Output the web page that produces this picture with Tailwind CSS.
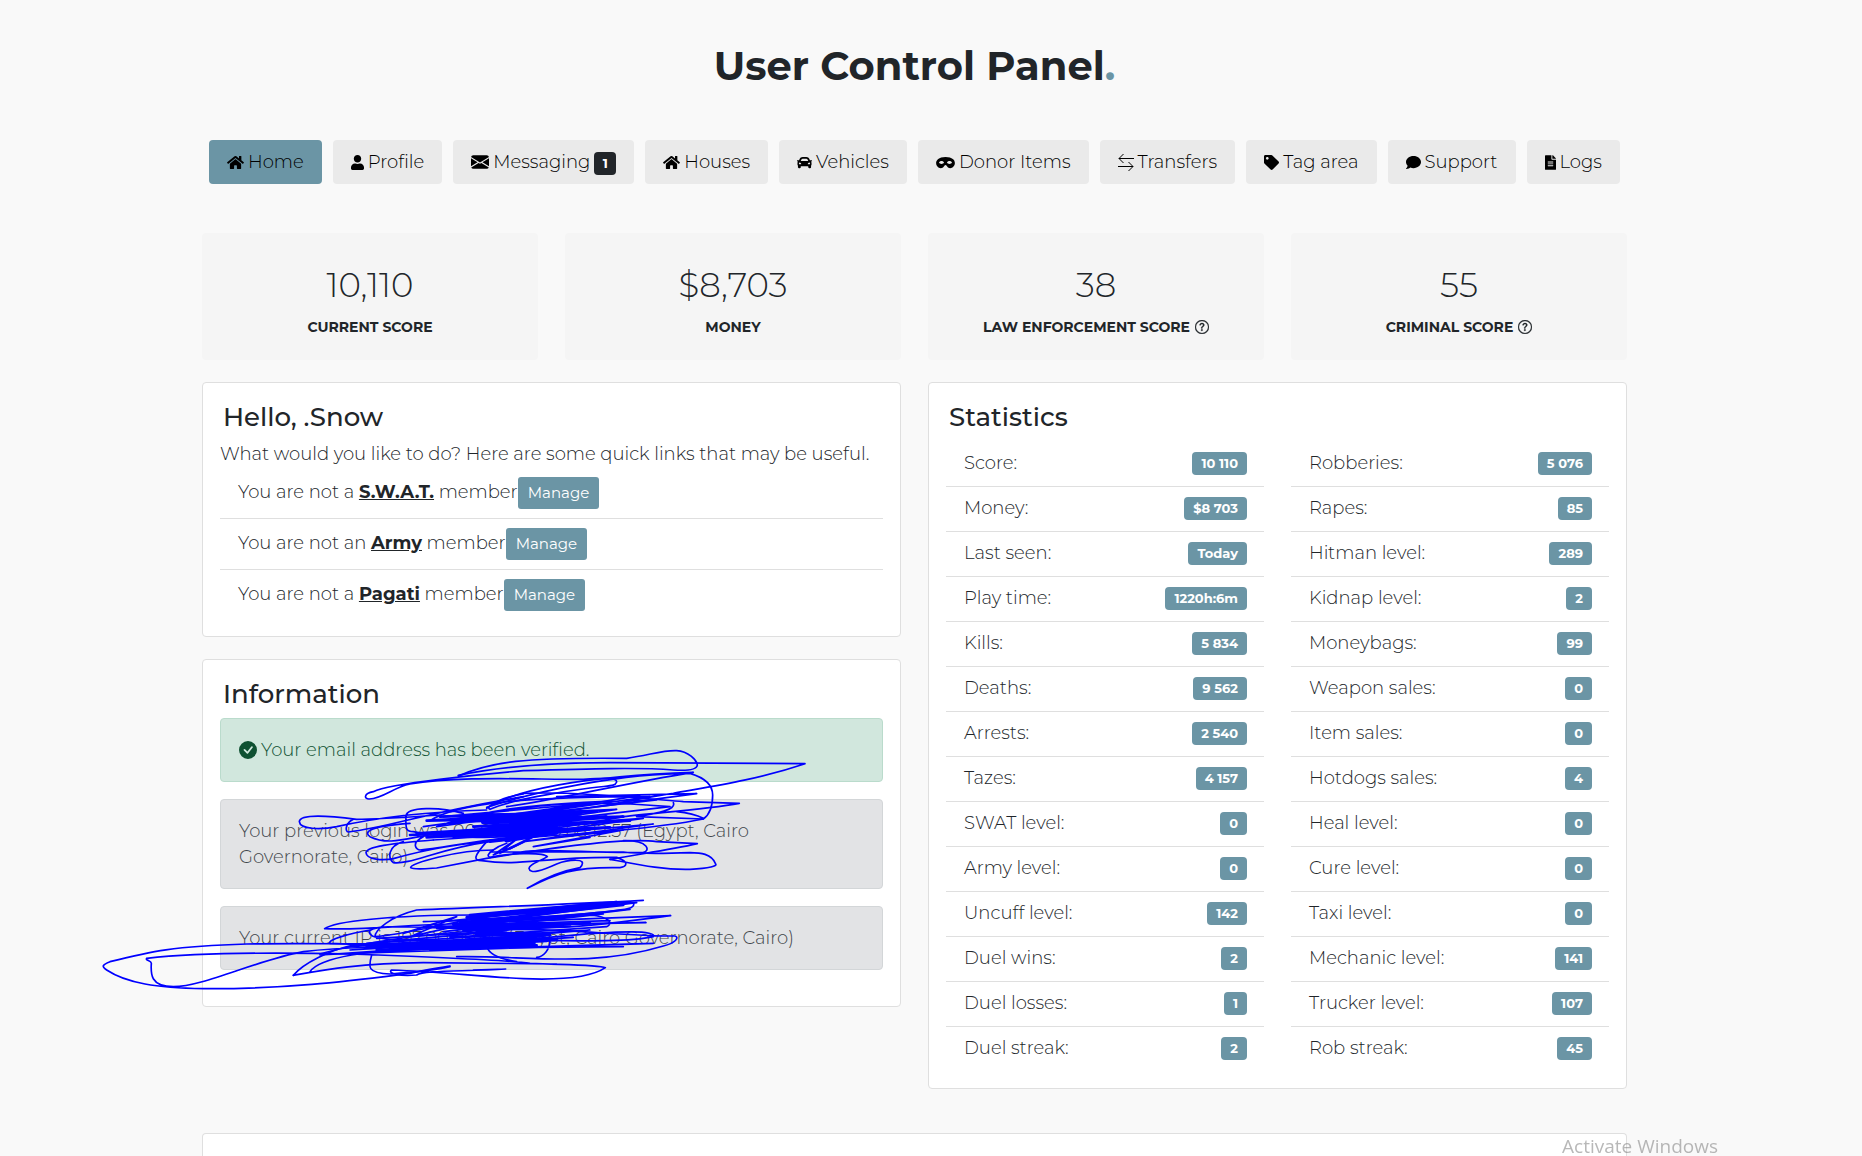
<!DOCTYPE html>
<html lang="en">

<head>
    <meta charset="UTF-8" />
    <meta name="viewport" content="width=device-width, initial-scale=1.0" />
    <title>User Control Panel</title>
    <script src="https://cdn.jsdelivr.net/npm/@tailwindcss/browser@4"></script>
</head>

<body class="bg-[#f9f9f9] text-[#212529] font-['Montserrat','Inter',sans-serif] font-light text-[18px] leading-[26px] pr-[33px] overflow-x-hidden">
    <div class="max-w-[1425px] mx-auto">
        <header class="pt-[42px] text-center">
            <h1 class="text-[40px] leading-[48px] font-bold">User Control Panel<span class="text-[#6b95a5]">.</span></h1>
        </header>

        <!-- Navigation -->
        <nav class="mt-[50px] flex flex-wrap justify-center gap-[11px] text-black whitespace-nowrap">
            <a href="#" class="h-11 px-[18px] flex items-center gap-1 rounded bg-[#6b95a5]">
                <svg class="w-[17px] h-[15px]" viewBox="0 0 576 512" fill="currentColor"><path d="M280.37 148.26L96 300.11V464a16 16 0 0 0 16 16l112.06-.29a16 16 0 0 0 15.92-16V368a16 16 0 0 1 16-16h64a16 16 0 0 1 16 16v95.64a16 16 0 0 0 16 16.05L464 480a16 16 0 0 0 16-16V300L295.67 148.26a12.19 12.19 0 0 0-15.3 0zM571.6 251.47L488 182.56V44.05a12 12 0 0 0-12-12h-56a12 12 0 0 0-12 12v72.61L318.47 43a48 48 0 0 0-61 0L4.34 251.47a12 12 0 0 0-1.6 16.9l25.5 31A12 12 0 0 0 45.15 301l235.22-193.74a12.19 12.19 0 0 1 15.3 0L530.9 301a12 12 0 0 0 16.9-1.6l25.5-31a12 12 0 0 0-1.7-16.93z" /></svg>
                Home
            </a>
            <a href="#" class="h-11 px-[18px] flex items-center gap-1 rounded bg-[#eaeaea]">
                <svg class="w-[13px] h-[15px]" viewBox="0 0 448 512" fill="currentColor"><path d="M224 256c70.7 0 128-57.3 128-128S294.7 0 224 0 96 57.3 96 128s57.3 128 128 128zm89.6 32h-16.7c-22.2 10.2-46.9 16-72.9 16s-50.6-5.8-72.9-16h-16.7C60.2 288 0 348.2 0 422.4V464c0 26.5 21.5 48 48 48h352c26.5 0 48-21.5 48-48v-41.6c0-74.2-60.2-134.4-134.4-134.4z" /></svg>
                Profile
            </a>
            <a href="#" class="h-11 px-[18px] flex items-center gap-1 rounded bg-[#eaeaea]">
                <svg class="size-[18px]" viewBox="0 0 16 16" fill="currentColor"><path d="M.05 3.555A2 2 0 0 1 2 2h12a2 2 0 0 1 1.95 1.555L8 8.414.05 3.555zM0 4.697v7.104l5.803-3.558L0 4.697zM6.761 8.83l-6.57 4.027A2 2 0 0 0 2 14h12a2 2 0 0 0 1.808-1.144l-6.57-4.027L8 9.586l-1.239-.757zm3.436-.586L16 11.801V4.697l-5.803 3.546z" /></svg>
                Messaging
                <span class="mt-[3px] h-[23px] w-[22px] text-center rounded bg-[#212529] text-white text-[13px] leading-[23px] font-bold">1</span>
            </a>
            <a href="#" class="h-11 px-[18px] flex items-center gap-1 rounded bg-[#eaeaea]">
                <svg class="w-[17px] h-[15px]" viewBox="0 0 576 512" fill="currentColor"><path d="M280.37 148.26L96 300.11V464a16 16 0 0 0 16 16l112.06-.29a16 16 0 0 0 15.92-16V368a16 16 0 0 1 16-16h64a16 16 0 0 1 16 16v95.64a16 16 0 0 0 16 16.05L464 480a16 16 0 0 0 16-16V300L295.67 148.26a12.19 12.19 0 0 0-15.3 0zM571.6 251.47L488 182.56V44.05a12 12 0 0 0-12-12h-56a12 12 0 0 0-12 12v72.61L318.47 43a48 48 0 0 0-61 0L4.34 251.47a12 12 0 0 0-1.6 16.9l25.5 31A12 12 0 0 0 45.15 301l235.22-193.74a12.19 12.19 0 0 1 15.3 0L530.9 301a12 12 0 0 0 16.9-1.6l25.5-31a12 12 0 0 0-1.7-16.93z" /></svg>
                Houses
            </a>
            <a href="#" class="h-11 px-[18px] flex items-center gap-1 rounded bg-[#eaeaea]">
                <svg class="size-[15px]" viewBox="0 0 512 512" fill="currentColor"><path d="M499.99 176h-59.87l-16.64-41.6C406.38 91.63 365.57 64 319.5 64h-127c-46.06 0-86.88 27.63-103.99 70.4L71.87 176H12.01C4.2 176-1.53 183.34.37 190.91l6 24C7.7 220.25 12.5 224 18.01 224h20.07C24.65 235.73 16 252.78 16 272v48c0 16.12 6.16 30.67 16 41.93V416c0 17.67 14.33 32 32 32h32c17.67 0 32-14.33 32-32v-32h256v32c0 17.67 14.33 32 32 32h32c17.67 0 32-14.33 32-32v-54.07c9.84-11.25 16-25.8 16-41.93v-48c0-19.22-8.65-36.27-22.07-48H494c5.51 0 10.31-3.75 11.64-9.09l6-24c1.89-7.57-3.84-14.91-11.65-14.91zm-352.06-17.83c7.29-18.22 24.94-30.17 44.57-30.17h127c19.63 0 37.28 11.95 44.57 30.17L384 208H128l19.93-49.83zM96 319.8c-19.2 0-32-12.76-32-31.9S76.8 256 96 256s48 28.71 48 47.85-28.8 15.95-48 15.95zm320 0c-19.2 0-48 3.19-48-15.95S396.8 256 416 256s32 12.76 32 31.9-12.8 31.9-32 31.9z" /></svg>
                Vehicles
            </a>
            <a href="#" class="h-11 px-[18px] flex items-center gap-1 rounded bg-[#eaeaea]">
                <svg class="w-[19px] h-[15px]" viewBox="0 0 640 512" fill="currentColor"><path d="M320.67 64c-442.6 0-357.57 384-158.46 384 39.9 0 77.47-20.69 101.42-55.86l25.73-37.79c15.66-22.99 46.97-22.99 62.63 0l25.73 37.79C401.66 427.31 439.23 448 479.13 448c189.86 0 290.63-384-158.46-384zM184 308.36c-41.06 0-67.76-25.66-80.08-41.05-5.23-6.53-5.23-16.09 0-22.63 12.32-15.4 39.01-41.05 80.08-41.05s67.76 25.66 80.08 41.05c5.23 6.53 5.23 16.09 0 22.63-12.32 15.4-39.02 41.05-80.08 41.05zm272 0c-41.06 0-67.76-25.66-80.08-41.05-5.23-6.53-5.23-16.09 0-22.63 12.32-15.4 39.01-41.05 80.08-41.05s67.76 25.66 80.08 41.05c5.23 6.53 5.23 16.09 0 22.63-12.32 15.4-39.02 41.05-80.08 41.05z" /></svg>
                Donor Items
            </a>
            <a href="#" class="h-11 px-[18px] flex items-center gap-1 rounded bg-[#eaeaea]">
                <svg class="w-4 h-[19px]" viewBox="0 0 16 19" fill="none" stroke="currentColor"><path d="M16 5.500H1M5.500 1 1 5.500l4.500 4.500M0 13.500h15M10.500 9 15 13.500 10.500 18" /></svg>
                Transfers
            </a>
            <a href="#" class="h-11 px-[18px] flex items-center gap-1 rounded bg-[#eaeaea]">
                <svg class="size-[15px]" viewBox="0 0 512 512" fill="currentColor"><path d="M0 252.118V48C0 21.49 21.49 0 48 0h204.118a48 48 0 0 1 33.941 14.059l211.882 211.882c18.745 18.745 18.745 49.137 0 67.882L293.823 497.941c-18.745 18.745-49.137 18.745-67.882 0L14.059 286.059A48 48 0 0 1 0 252.118zM112 64c-26.51 0-48 21.49-48 48s21.49 48 48 48 48-21.49 48-48-21.49-48-48-48z" /></svg>
                Tag area
            </a>
            <a href="#" class="h-11 px-[18px] flex items-center gap-1 rounded bg-[#eaeaea]">
                <svg class="size-[15px]" viewBox="0 0 512 512" fill="currentColor"><path d="M256 32C114.6 32 0 125.1 0 240c0 49.6 21.4 95 57 130.7C44.5 421.1 2.7 466 2.2 466.5c-2.2 2.3-2.8 5.7-1.5 8.7S4.8 480 8 480c66.3 0 116-31.8 140.6-51.4 32.7 12.3 69 19.4 107.4 19.4 141.4 0 256-93.1 256-208S397.4 32 256 32z" /></svg>
                Support
            </a>
            <a href="#" class="h-11 px-[18px] flex items-center gap-1 rounded bg-[#eaeaea]">
                <svg class="w-[11px] h-[15px]" viewBox="0 0 384 512" fill="currentColor"><path d="M224 136V0H24C10.700 0 0 10.700 0 24v464c0 13.300 10.700 24 24 24h336c13.300 0 24-10.700 24-24V160H248c-13.200 0-24-10.800-24-24zm64 236c0 6.600-5.400 12-12 12H108c-6.600 0-12-5.400-12-12v-8c0-6.600 5.400-12 12-12h168c6.600 0 12 5.400 12 12v8zm0-64c0 6.600-5.400 12-12 12H108c-6.600 0-12-5.400-12-12v-8c0-6.600 5.400-12 12-12h168c6.600 0 12 5.400 12 12v8zm0-72v8c0 6.600-5.400 12-12 12H108c-6.600 0-12-5.400-12-12v-8c0-6.600 5.400-12 12-12h168c6.600 0 12 5.400 12 12zm96-114.100v6.100H256V0h6.100c6.400 0 12.500 2.500 17 7l97.900 98c4.500 4.500 7 10.600 7 16.900z" /></svg>
                Logs
            </a>
        </nav>

        <!-- Score cards -->
        <section class="mt-[49px] grid grid-cols-4 gap-[27px] text-center">
            <div class="h-[127px] pt-8 rounded bg-[#f5f5f5]">
                <p class="text-[34px] leading-10">10,110</p>
                <h2 class="mt-[9px] text-[14px] font-bold uppercase">Current score</h2>
            </div>
            <div class="h-[127px] pt-8 rounded bg-[#f5f5f5]">
                <p class="text-[34px] leading-10">$8,703</p>
                <h2 class="mt-[9px] text-[14px] font-bold uppercase">Money</h2>
            </div>
            <div class="h-[127px] pt-8 rounded bg-[#f5f5f5]">
                <p class="text-[34px] leading-10">38</p>
                <h2 class="mt-[9px] flex justify-center items-center gap-[5px] text-[14px] font-bold uppercase">
                    Law enforcement score
                    <svg class="size-[14px]" viewBox="0 0 16 16" fill="currentColor" stroke="currentColor" stroke-width=".4"><path d="M8 15A7 7 0 1 1 8 1a7 7 0 0 1 0 14zm0 1A8 8 0 1 0 8 0a8 8 0 0 0 0 16z" /><path d="M5.255 5.786a.237.237 0 0 0 .241.247h.825c.138 0 .248-.113.266-.25.09-.656.54-1.134 1.342-1.134.686 0 1.314.343 1.314 1.168 0 .635-.374.927-.965 1.371-.673.489-1.206 1.060-1.168 1.987l.003.217a.25.25 0 0 0 .25.246h.811a.25.25 0 0 0 .25-.25v-.105c0-.718.273-.927 1.010-1.486.609-.463 1.244-.977 1.244-2.056 0-1.511-1.276-2.241-2.673-2.241-1.267 0-2.655.59-2.750 2.286zm1.557 5.763c0 .533.425.927 1.010.927.609 0 1.028-.394 1.028-.927 0-.552-.42-.94-1.029-.94-.584 0-1.009.388-1.009.94z" /></svg>
                </h2>
            </div>
            <div class="h-[127px] pt-8 rounded bg-[#f5f5f5]">
                <p class="text-[34px] leading-10">55</p>
                <h2 class="mt-[9px] flex justify-center items-center gap-[5px] text-[14px] font-bold uppercase">
                    Criminal score
                    <svg class="size-[14px]" viewBox="0 0 16 16" fill="currentColor" stroke="currentColor" stroke-width=".4"><path d="M8 15A7 7 0 1 1 8 1a7 7 0 0 1 0 14zm0 1A8 8 0 1 0 8 0a8 8 0 0 0 0 16z" /><path d="M5.255 5.786a.237.237 0 0 0 .241.247h.825c.138 0 .248-.113.266-.25.09-.656.54-1.134 1.342-1.134.686 0 1.314.343 1.314 1.168 0 .635-.374.927-.965 1.371-.673.489-1.206 1.060-1.168 1.987l.003.217a.25.25 0 0 0 .25.246h.811a.25.25 0 0 0 .25-.25v-.105c0-.718.273-.927 1.010-1.486.609-.463 1.244-.977 1.244-2.056 0-1.511-1.276-2.241-2.673-2.241-1.267 0-2.655.59-2.750 2.286zm1.557 5.763c0 .533.425.927 1.010.927.609 0 1.028-.394 1.028-.927 0-.552-.42-.94-1.029-.94-.584 0-1.009.388-1.009.94z" /></svg>
                </h2>
            </div>
        </section>

        <main class="mt-[22px] grid grid-cols-2 gap-[27px] items-start">
            <div class="flex flex-col gap-[22px]">
                <!-- Quick links -->
                <section class="p-[17px] pb-4 bg-white border border-[#dfdfdf] rounded">
                    <h2 class="ml-[3px] mb-1.5 text-[26px] leading-[35px] font-medium">Hello, .Snow</h2>
                    <p class="leading-[27px]">What would you like to do? Here are some quick links that may be useful.</p>
                    <ul class="divide-y divide-[#dfdfdf]">
                        <li class="px-[18px] py-[9px] flex items-baseline">
                            <span>You are not a <b class="font-bold underline">S.W.A.T.</b> member</span>
                            <button class="h-8 px-[10px] rounded-[3px] bg-[#6b95a5] text-white text-[15px] font-normal">Manage</button>
                        </li>
                        <li class="px-[18px] py-[9px] flex items-baseline">
                            <span>You are not an <b class="font-bold underline">Army</b> member</span>
                            <button class="h-8 px-[10px] rounded-[3px] bg-[#6b95a5] text-white text-[15px] font-normal">Manage</button>
                        </li>
                        <li class="px-[18px] py-[9px] flex items-baseline">
                            <span>You are not a <b class="font-bold underline">Pagati</b> member</span>
                            <button class="h-8 px-[10px] rounded-[3px] bg-[#6b95a5] text-white text-[15px] font-normal">Manage</button>
                        </li>
                    </ul>
                </section>

                <!-- Account information -->
                <section class="relative p-[17px] pb-9 bg-white border border-[#dfdfdf] rounded">
                    <h2 class="ml-[3px] mb-1.5 text-[26px] leading-[35px] font-medium">Information</h2>
                    <div class="flex flex-col gap-[17px] text-[#41464b]">
                        <div class="p-[18px] flex items-center gap-1 rounded border border-[#badbcc] bg-[#d1e7dd] text-[#0f5132]">
                            <svg class="size-[18px]" viewBox="0 0 16 16" fill="currentColor"><path d="M16 8A8 8 0 1 1 0 8a8 8 0 0 1 16 0zm-3.970-3.030a.75.75 0 0 0-1.080.022L7.477 9.417 5.384 7.323a.75.75 0 0 0-1.060 1.060L6.970 11.030a.75.75 0 0 0 1.079-.02l3.992-4.990a.75.75 0 0 0-.01-1.050z" /></svg>
                            Your email address has been verified.
                        </div>
                        <div class="p-[18px] rounded border border-[#d3d6d8] bg-[#e2e3e5]">
                            Your previous login was 00.00.00. 00.68.12.57 (Egypt, Cairo<br>Governorate, Cairo)
                        </div>
                        <div class="p-[18px] rounded border border-[#d3d6d8] bg-[#e2e3e5]">
                            Your current IP is 197.00.00.00 (Egypt, Cairo Governorate, Cairo)
                        </div>
                    </div>

                    <!-- Pen marks over the private details -->
                    <svg class="absolute top-20 -left-[103px] w-[720px] h-[260px] max-w-none pointer-events-none" viewBox="30 270 2160 780" fill="none" stroke="#0000ff" stroke-width="5" stroke-linecap="round" stroke-linejoin="round" aria-hidden="true">
                        <path d="M1105 378C1200 335 1300 322 1610 325C1680 315 1720 300 1760 302C1795 304 1820 330 1822 345C1820 362 1780 362 1750 360C1650 352 1500 356 1300 362C1180 372 900 400 850 425C820 430 822 448 838 447C880 445 910 412 960 402C1100 378 1300 388 1480 388C1540 384 1582 382 1580 396C1575 410 1560 406 1500 414C1420 424 1260 450 1200 478C1180 470 1240 440 1300 432" />
                        <path d="M1105 376C1230 350 1400 338 1560 338L2145 341C2000 390 1860 410 1750 430C1600 452 1500 480 1300 500L1820 431L1400 440L1650 436L1270 500" />
                        <path d="M1190 475C1270 420 1480 378 1810 367C1600 400 1400 450 1250 470M1190 472C1350 420 1600 370 1800 370C1850 385 1868 410 1868 435C1868 480 1850 500 1840 507C1700 535 1500 550 1200 570" />
                        <path d="M1300 430C1450 425 1600 440 1780 455L1948 460C1850 478 1700 488 1600 500C1400 540 1200 560 1030 570M1750 458C1760 480 1700 490 1640 500L1840 507M1760 485C1790 488 1820 495 1840 505" />
                        <path d="M1050 495C900 505 840 508 800 508C720 498 630 490 628 515C630 538 690 540 740 530C850 505 1000 485 1190 480M790 508C765 520 765 545 775 546C900 530 1000 490 1300 440M1120 490C1050 470 950 470 948 498C946 540 950 545 970 545C1100 575 1300 560 1500 540" />
                        <path d="M960 520C820 530 825 550 840 560C900 590 960 560 1050 550M1030 570C900 580 830 590 828 608C830 630 880 632 910 626C1000 600 1100 580 1250 570M940 575C890 590 895 625 910 638C960 645 1050 595 1200 575M1000 560C960 580 980 600 990 600C1100 590 1200 560 1400 550M1210 600C1100 600 960 640 962 653C970 660 1010 656 1040 654L1190 625C1350 600 1600 560 1700 575L1822 581C1740 600 1660 610 1560 628" />
                        <path d="M1190 575C1150 620 1150 632 1175 632C1300 650 1350 620 1580 622C1620 635 1610 650 1590 653C1450 650 1400 670 1312 715C1370 680 1420 662 1470 653C1500 620 1430 630 1400 642C1360 660 1320 675 1317 655C1320 640 1350 635 1372 620C1360 605 1250 610 1200 622C1180 615 1220 590 1250 580M1560 628C1650 645 1720 660 1800 658C1860 655 1882 648 1877 642C1865 610 1830 608 1800 608C1700 612 1650 612 1600 606L1200 606M1600 572C1680 570 1680 605 1660 607C1500 612 1350 590 1270 610" />
                        <path d="M1020 512C1100 460 1300 440 1680 440L1040 530C1200 470 1400 455 1700 450L1080 520C1300 455 1500 450 1740 470L1100 545M1000 530L1500 460L1060 500L1580 478L1150 540L1660 505L1260 560L1690 522L1300 575L1600 540L1330 590L1500 562M1240 600L1290 560L1210 615L1310 572L1230 610" />
                        <path stroke-width="8" d="M1050 500L1520 485L1010 512L1550 500L1100 515L1600 500L1150 530L1620 512L980 550L1500 520L960 555L1560 532L1010 562L1450 540L1090 560L1400 550L1200 575L1330 560L1260 595" />
                        <path stroke-width="15" d="M1150 500L1470 490L1180 515L1440 510L1210 530L1400 535L1170 550L1370 550L1250 570" />

                        <path d="M1660 751C1400 765 1200 770 980 780C900 800 855 840 855 860C1000 850 1200 770 1630 757C1640 780 1590 780 1520 788C1300 810 1100 810 1000 815M1150 795C900 795 730 815 704 836C800 840 900 830 1000 825L1742 797C1600 815 1500 830 1400 832C1100 850 850 810 838 845C835 880 1000 870 1200 870" />
                        <path d="M840 840C780 850 710 870 720 880C900 890 1200 880 1400 860C1600 840 1700 842 1690 860C1600 880 1400 870 1300 870M690 912C800 880 1000 850 1200 840C1400 830 1600 860 1755 858C1770 862 1755 880 1720 888C1500 955 1300 915 1100 920" />
                        <path d="M1240 880C950 885 600 878 470 882C250 888 180 905 60 935C35 945 35 950 50 960C110 1000 200 1013 340 1016C600 1018 800 990 960 970C1000 960 1040 955 1080 948M610 976C640 940 720 900 790 885M170 926C165 930 185 933 184 940C182 970 180 1010 250 1010C340 1010 500 930 640 905C850 880 1050 900 1200 890" />
                        <path d="M170 925C350 905 600 908 780 912C1000 920 1250 930 1320 940C1450 945 1530 945 1546 953C1500 985 1400 990 1300 986C1150 978 1050 965 905 960C890 970 930 980 980 975C1000 960 1120 965 1247 957M845 915C835 950 830 970 900 972C1000 965 1040 960 1080 950M610 976C700 960 800 940 1000 938L1400 942M660 965C690 920 850 900 1000 895L1600 890M1150 960L1247 957M1380 870C1380 900 1360 920 1340 922M1190 890C1200 920 1250 930 1280 935" />
                        <path d="M1060 815L1580 760L1130 800L1640 758L1040 835L1620 778L1060 845L1540 792M1000 830L1668 818L1100 826L1560 812M1500 795C1560 800 1570 822 1550 830L1080 862M860 865L1250 842L830 880L1500 840L780 900L1450 862L690 915L1300 880L740 912L1690 880L1020 900M940 850L1100 800L960 860L1160 815" />
                        <path stroke-width="8" d="M1140 795L1580 756L1130 803L1600 765L1110 818L1480 795L1090 824L1500 820L1060 832L1440 828L1120 840L1350 835M790 888L1380 855L830 892L1400 870L860 900L1340 886L1000 895L1280 880" />
                        <path stroke-width="14" d="M1150 812L1260 808L1150 830L1300 828L1160 850L1360 855L1130 872L1370 870L1050 882L1330 878" />
                    </svg>
                </section>
            </div>

            <!-- Statistics -->
            <section class="p-[17px] bg-white border border-[#dfdfdf] rounded">
                <h2 class="ml-[3px] mb-[7px] text-[26px] leading-[35px] font-medium">Statistics</h2>
                <div class="grid grid-cols-2 gap-[27px]">
                    <ul id="statsLeft" class="divide-y divide-[#dfdfdf]"></ul>
                    <ul id="statsRight" class="divide-y divide-[#dfdfdf]"></ul>
                </div>
            </section>
        </main>

        <section class="mt-11 h-[23px] bg-white border border-b-0 border-[#dfdfdf] rounded-t"></section>
    </div>

    <div class="fixed bottom-0 right-[144px] text-[19px] leading-5 font-['Open_Sans',sans-serif] font-normal text-[#7d7d7d]/55 pointer-events-none">Activate Windows</div>

    <script>
        const statsLeft = [
            ['Score', '10 110'], ['Money', '$8 703'], ['Last seen', 'Today'], ['Play time', '1220h:6m'],
            ['Kills', '5 834'], ['Deaths', '9 562'], ['Arrests', '2 540'], ['Tazes', '4 157'],
            ['SWAT level', '0'], ['Army level', '0'], ['Uncuff level', '142'], ['Duel wins', '2'],
            ['Duel losses', '1'], ['Duel streak', '2']
        ];
        const statsRight = [
            ['Robberies', '5 076'], ['Rapes', '85'], ['Hitman level', '289'], ['Kidnap level', '2'],
            ['Moneybags', '99'], ['Weapon sales', '0'], ['Item sales', '0'], ['Hotdogs sales', '4'],
            ['Heal level', '0'], ['Cure level', '0'], ['Taxi level', '0'], ['Mechanic level', '141'],
            ['Trucker level', '107'], ['Rob streak', '45']
        ];

        function renderStats(id, stats) {
            document.getElementById(id).innerHTML = stats.map(([label, value]) => `
                <li class="pl-[18px] pr-[17px] pt-2 pb-[10px] flex items-center justify-between">
                    ${label}:
                    <span class="px-[9px] rounded bg-[#6b95a5] text-white text-[13px] leading-[23px] font-bold">${value}</span>
                </li>`).join('');
        }

        renderStats('statsLeft', statsLeft);
        renderStats('statsRight', statsRight);
    </script>
</body>

</html>
